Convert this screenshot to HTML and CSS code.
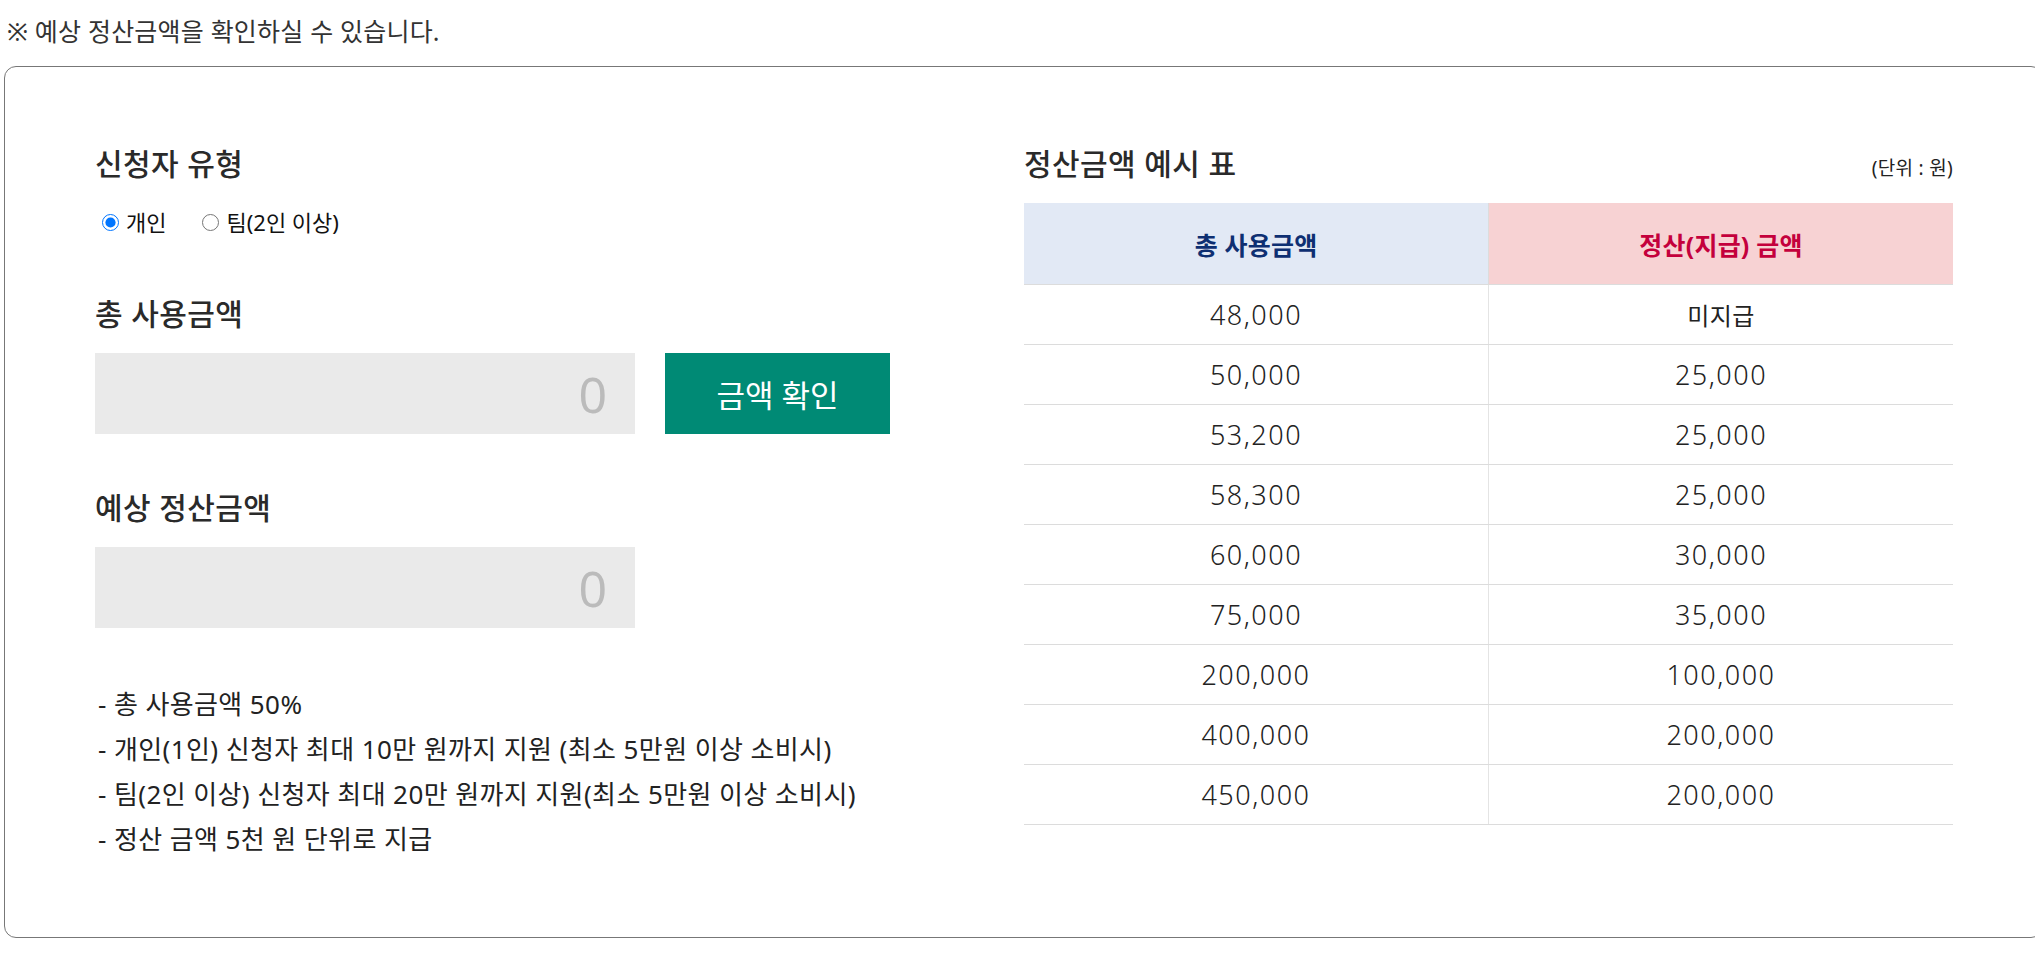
FILE: index.html
```html
<!DOCTYPE html>
<html lang="ko">
<head>
<meta charset="utf-8">
<title>예상 정산금액</title>
<link rel="stylesheet" href="styles.css">
</head>
<body>
<p class="notice">※ 예상 정산금액을 확인하실 수 있습니다.</p>
<div class="calc-box">
  <div class="calc-left">
    <h3 class="sec-title">신청자 유형</h3>
    <div class="radio-row">
      <label class="radio"><input type="radio" name="type" checked><span>개인</span></label>
      <label class="radio"><input type="radio" name="type"><span>팀(2인 이상)</span></label>
    </div>
    <h3 class="sec-title sec-gap1">총 사용금액</h3>
    <div class="input-row">
      <input class="amount" type="text" value="0" readonly>
      <button class="check-btn" type="button">금액 확인</button>
    </div>
    <h3 class="sec-title sec-gap2">예상 정산금액</h3>
    <div class="input-row">
      <input class="amount" type="text" value="0" readonly>
    </div>
    <ul class="notes">
      <li>- 총 사용금액 50%</li>
      <li>- 개인(1인) 신청자 최대 10만 원까지 지원 (최소 5만원 이상 소비시)</li>
      <li>- 팀(2인 이상) 신청자 최대 20만 원까지 지원(최소 5만원 이상 소비시)</li>
      <li>- 정산 금액 5천 원 단위로 지급</li>
    </ul>
  </div>
  <div class="calc-right">
    <div class="table-head">
      <h3 class="sec-title">정산금액 예시 표</h3>
      <span class="unit">(단위 : 원)</span>
    </div>
    <table class="ex-table">
      <thead>
        <tr><th class="th-use">총 사용금액</th><th class="th-pay">정산(지급) 금액</th></tr>
      </thead>
      <tbody>
        <tr><td>48,000</td><td class="ko">미지급</td></tr>
        <tr><td>50,000</td><td>25,000</td></tr>
        <tr><td>53,200</td><td>25,000</td></tr>
        <tr><td>58,300</td><td>25,000</td></tr>
        <tr><td>60,000</td><td>30,000</td></tr>
        <tr><td>75,000</td><td>35,000</td></tr>
        <tr><td>200,000</td><td>100,000</td></tr>
        <tr><td>400,000</td><td>200,000</td></tr>
        <tr><td>450,000</td><td>200,000</td></tr>
      </tbody>
    </table>
  </div>
</div>
</body>
</html>
```

FILE: styles.css
```css
html, body {
  margin: 0;
  padding: 0;
  overflow: hidden;
  background: #fff;
}
body {
  font-family: "Noto Sans", "Noto Sans CJK KR", sans-serif;
  color: #333;
}
.notice {
  margin: 0;
  padding: 16px 0 0 7px;
  font-size: 25px;
  line-height: 30px;
  color: #333;
  letter-spacing: 0.2px;
}
.calc-box {
  box-sizing: border-box;
  margin: 20px 0 0 4px;
  width: 2039px;
  height: 872px;
  border: 1px solid #777;
  border-radius: 12px;
  padding: 80px 0 0 90px;
  display: flex;
  align-items: flex-start;
}
.calc-left {
  width: 795px;
  flex: none;
}
.calc-right {
  width: 929px;
  margin-left: 134px;
  flex: none;
}
.sec-title {
  margin: 0;
  font-size: 30px;
  line-height: 34px;
  font-weight: 500;
  color: #2a2a2a;
  letter-spacing: 0.4px;
}
.sec-gap1 { margin-top: 63px; }
.sec-gap2 { margin-top: 57px; }
.radio-row {
  margin-top: 29px;
  display: flex;
  align-items: center;
  height: 24px;
  padding-left: 7px;
}
.radio {
  display: flex;
  align-items: center;
  font-size: 22px;
  line-height: 24px;
  color: #111;
  margin-right: 36px;
}
.radio input {
  width: 17px;
  height: 17px;
  margin: 0 7px 0 0;
}
.input-row {
  margin-top: 22px;
  display: flex;
}
.amount {
  box-sizing: border-box;
  width: 540px;
  height: 81px;
  border: none;
  background: #eaeaea;
  text-align: right;
  padding: 0 28px 0 0;
  font-family: "Noto Sans", sans-serif;
  font-size: 50px;
  color: #bbb;
  outline: none;
}
.check-btn {
  width: 225px;
  height: 81px;
  margin-left: 30px;
  border: none;
  background: #008a75;
  color: #fff;
  font-family: "Noto Sans", "Noto Sans CJK KR", sans-serif;
  font-size: 31px;
  letter-spacing: 0;
  cursor: pointer;
}
.notes {
  list-style: none;
  margin: 54px 0 0;
  padding: 0 0 0 3px;
  font-size: 26px;
  line-height: 45px;
  color: #222;
  letter-spacing: 0.4px;
}
.table-head {
  display: flex;
  justify-content: space-between;
  align-items: baseline;
}
.unit {
  font-size: 19px;
  color: #222;
  letter-spacing: 0.3px;
}
.ex-table {
  margin-top: 22px;
  width: 929px;
  border-collapse: collapse;
  table-layout: fixed;
}
.ex-table th {
  height: 81px;
  padding: 0;
  font-size: 25px;
  font-weight: 700;
  border-bottom: 1px solid #dcdcdc;
  letter-spacing: 0.2px;
}
.th-use {
  background: #e2e9f5;
  color: #0e2f72;
  border-right: 1px solid #dcdcdc;
}
.th-pay {
  background: #f7d2d3;
  color: #c4003c;
}
.ex-table td {
  height: 59px;
  padding: 0;
  text-align: center;
  border-bottom: 1px solid #dcdcdc;
  font-family: "Noto Sans", sans-serif;
  font-weight: 300;
  font-size: 27px;
  letter-spacing: 1.5px;
  color: #222;
}
.ex-table td:first-child {
  border-right: 1px solid #e4e4e4;
}
.ex-table td.ko {
  font-family: "Noto Sans CJK KR", sans-serif;
  font-size: 24px;
  letter-spacing: 0.5px;
  font-weight: 400;
}
```
